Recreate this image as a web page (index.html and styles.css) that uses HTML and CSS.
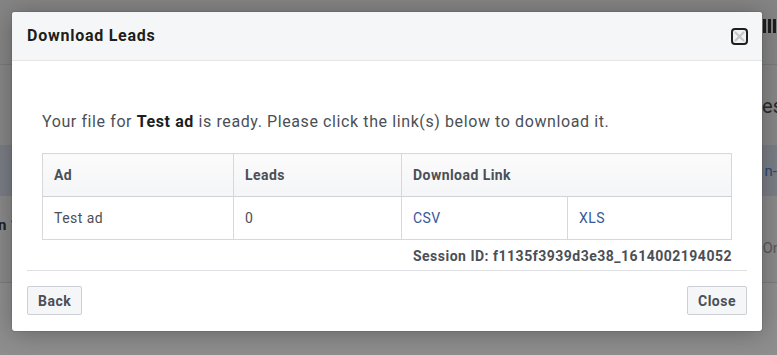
FILE: index.html
```html
<!DOCTYPE html>
<html>
<head>
<meta charset="utf-8">
<link rel="stylesheet" href="styles.css">
</head>
<body>
<div class="page">
  <div class="row row-top">
    <span class="bars"><i></i><i></i><i></i><i></i></span>
  </div>
  <div class="row row-title"><span></span><span class="dark-text">es</span></div>
  <div class="row row-blue"><span></span><span class="blue-text">n-I</span></div>
  <div class="row row-list">
    <span class="left-text">n 1</span>
    <span class="right-text">On</span>
  </div>
  <div class="row row-bottom"></div>
</div>

<div class="modal">
  <div class="modal-header">
    <h2 class="modal-title">Download Leads</h2>
    <button class="close-btn" aria-label="Close">
      <svg width="17" height="17" viewBox="0 0 17 17">
        <rect x="1" y="1" width="15" height="15" rx="3" ry="3" fill="#f1f2f4" stroke="#1c1e21" stroke-width="2"/>
        <path d="M4.5 4.5 L12.5 12.5 M12.5 4.5 L4.5 12.5" stroke="#c4c6ca" stroke-width="2.2" stroke-linecap="round"/>
      </svg>
    </button>
  </div>
  <div class="modal-body">
    <p class="intro">Your file for <b>Test ad</b> is ready. Please click the link(s) below to download it.</p>
    <table class="leads">
      <thead>
        <tr>
          <th class="c1">Ad</th>
          <th class="c2">Leads</th>
          <th colspan="2">Download Link</th>
        </tr>
      </thead>
      <tbody>
        <tr>
          <td>Test ad</td>
          <td>0</td>
          <td class="c3"><a href="#">CSV</a></td>
          <td><a href="#">XLS</a></td>
        </tr>
      </tbody>
    </table>
    <div class="session">Session ID: f1135f3939d3e38_1614002194052</div>
  </div>
  <div class="modal-footer">
    <button class="btn">Back</button>
    <button class="btn">Close</button>
  </div>
</div>
</body>
</html>
```

FILE: styles.css
```css
html, body {
  margin: 0;
  padding: 0;
}
body {
  width: 777px;
  height: 355px;
  overflow: hidden;
  background: #8f8f8f;
  font-family: Roboto, "Liberation Sans", Arial, sans-serif;
  position: relative;
}

/* dimmed page behind the dialog */
.page {
  display: flex;
  flex-direction: column;
}
.row {
  display: flex;
  justify-content: space-between;
  align-items: center;
}
.row-top {
  height: 64px;
  background: #858585;
  border-bottom: 1px solid #7a7a7a;
  justify-content: flex-end;
}
.bars {
  display: flex;
  gap: 2px;
  margin-right: -4px;
  margin-top: -12px;
}
.bars i {
  display: block;
  width: 3px;
  height: 14px;
  background: #1e1e1e;
}
.row-title {
  height: 80px;
  background: #878787;
}
.dark-text {
  font-size: 20px;
  color: #2a2a2a;
  margin-right: -6px;
  margin-top: 2px;
}
.row-blue {
  height: 51px;
  background: #7a7e85;
}
.blue-text {
  font-size: 15px;
  color: #2f4770;
  margin-right: -4px;
}
.row-list {
  height: 86px;
  background: #8a8a8a;
  border-bottom: 1px solid #7c7c7c;
  align-items: flex-start;
}
.left-text {
  font-size: 15px;
  font-weight: bold;
  color: #1f1f1f;
  margin-left: -2px;
  margin-top: 20px;
}
.right-text {
  font-size: 15px;
  color: #585858;
  margin-right: -4px;
  margin-top: 43px;
}
.row-bottom {
  height: 73px;
  background: #8e8e8e;
}

/* dialog */
.modal {
  position: absolute;
  left: 12px;
  top: 12px;
  width: 750px;
  background: #fff;
  border-radius: 3px;
  box-shadow: 0 2px 26px rgba(0, 0, 0, 0.3), 0 0 0 1px rgba(0, 0, 0, 0.08);
  overflow: hidden;
}
.modal-header {
  height: 48px;
  background: #f5f6f7;
  border-bottom: 1px solid #e5e5e5;
  display: flex;
  align-items: center;
  justify-content: space-between;
  padding: 0 14px 0 15px;
}
.modal-title {
  margin: 0;
  font-size: 16px;
  font-weight: bold;
  color: #1c1e21;
  line-height: 20px;
  letter-spacing: 0.75px;
}
.close-btn {
  border: 0;
  background: none;
  padding: 0;
  width: 17px;
  height: 17px;
  margin-top: 1px;
  display: block;
}
.close-btn svg {
  display: block;
}
.modal-body {
  padding: 51px 30px 0 30px;
}
.intro {
  margin: 0 0 21px 0;
  font-size: 16px;
  line-height: 20px;
  color: #4b4f56;
  letter-spacing: 0.6px;
}
.intro b {
  color: #1c1e21;
}
.leads {
  width: 690px;
  border-collapse: collapse;
  font-size: 14px;
  color: #4b4f56;
  letter-spacing: 0.45px;
}
.leads th,
.leads td {
  border: 1px solid #d6d8dc;
  height: 43px;
  padding: 0 11px;
  text-align: left;
  box-sizing: border-box;
}
.leads th {
  font-weight: bold;
  background: linear-gradient(#fbfbfc, #f4f5f6);
  border-bottom-color: #cfd2d6;
}
.leads .c1 { width: 191px; }
.leads .c2 { width: 168px; }
.leads .c3 { width: 166px; }
.leads a {
  color: #365899;
  text-decoration: none;
}
.session {
  text-align: right;
  font-size: 14px;
  font-weight: bold;
  color: #4b4f56;
  line-height: 20px;
  margin-top: 6px;
  padding-bottom: 4px;
  letter-spacing: 0.5px;
}
.modal-footer {
  margin: 0 15px;
  border-top: 1px solid #dddfe2;
  padding: 15px 0 16px 0;
  display: flex;
  justify-content: space-between;
}
.btn {
  height: 29px;
  padding: 0 10px;
  font-family: Roboto, "Liberation Sans", Arial, sans-serif;
  font-size: 14px;
  font-weight: bold;
  color: #4b4f56;
  background: #f5f6f7;
  border: 1px solid #ccd0d5;
  border-radius: 2px;
  letter-spacing: 0.5px;
}
```
